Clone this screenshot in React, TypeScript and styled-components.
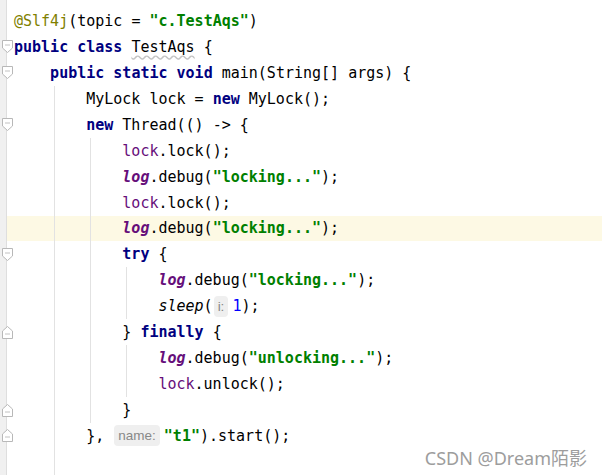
import React from "react";
import styled, { createGlobalStyle } from "styled-components";

const Global = createGlobalStyle`
  html, body { margin: 0; padding: 0; background: #ffffff; }
  #root { height: 100vh; }
`;

type Kind = "p" | "kw" | "ann" | "str" | "num" | "field" | "var" | "it" | "cls" | "hint";
type Tok = [Kind, string];
type Fold = "open" | "close" | undefined;

interface LineDef {
  indent: number;
  guides: number[];
  toks: Tok[];
  fold?: Fold;
  hl?: boolean;
}

const LINES: LineDef[] = [
  { indent: 0, guides: [], toks: [["ann", "@Slf4j"], ["p", "(topic = "], ["str", '"c.TestAqs"'], ["p", ")"]] },
  { indent: 0, guides: [], fold: "open", toks: [["kw", "public class "], ["cls", "TestAqs"], ["p", " {"]] },
  { indent: 1, guides: [], fold: "open", toks: [["kw", "public static void "], ["p", "main(String[] args) {"]] },
  { indent: 2, guides: [1], toks: [["p", "MyLock lock = "], ["kw", "new "], ["p", "MyLock();"]] },
  { indent: 2, guides: [1], fold: "open", toks: [["kw", "new "], ["p", "Thread(() -> {"]] },
  { indent: 3, guides: [1, 2], toks: [["var", "lock"], ["p", ".lock();"]] },
  { indent: 3, guides: [1, 2], toks: [["field", "log"], ["p", ".debug("], ["str", '"locking..."'], ["p", ");"]] },
  { indent: 3, guides: [1, 2], toks: [["var", "lock"], ["p", ".lock();"]] },
  { indent: 3, guides: [1, 2], hl: true, toks: [["field", "log"], ["p", ".debug("], ["str", '"locking..."'], ["p", ");"]] },
  { indent: 3, guides: [1, 2], fold: "open", toks: [["kw", "try "], ["p", "{"]] },
  { indent: 4, guides: [1, 2, 3], toks: [["field", "log"], ["p", ".debug("], ["str", '"locking..."'], ["p", ");"]] },
  { indent: 4, guides: [1, 2, 3], toks: [["it", "sleep"], ["p", "("], ["hint", "i:"], ["num", "1"], ["p", ");"]] },
  { indent: 3, guides: [1, 2], fold: "close", toks: [["p", "} "], ["kw", "finally "], ["p", "{"]] },
  { indent: 4, guides: [1, 2, 3], toks: [["field", "log"], ["p", ".debug("], ["str", '"unlocking..."'], ["p", ");"]] },
  { indent: 4, guides: [1, 2, 3], toks: [["var", "lock"], ["p", ".unlock();"]] },
  { indent: 3, guides: [1, 2], fold: "close", toks: [["p", "}"]] },
  { indent: 2, guides: [1], fold: "close", toks: [["p", "}, "], ["hint", "name:"], ["str", '"t1"'], ["p", ").start();"]] },
  { indent: 2, guides: [1], toks: [] },
];

const LINE_H = "26.12px";

const Editor = styled.div`
  display: flex;
  height: 100vh;
  overflow: hidden;
  background: #ffffff;
  position: relative;
`;

const Gutter = styled.div`
  width: 6px;
  flex: none;
  padding-top: 8px;
  background: #f0f0f0;
  border-right: 1px solid #dedede;
  display: flex;
  flex-direction: column;
`;

const GutterCell = styled.div`
  height: ${LINE_H};
  display: flex;
  align-items: center;
  overflow: visible;
`;

const FoldIcon = styled.svg`
  flex: none;
  width: 11px;
  height: 13px;
  margin-left: 2px;
  position: relative;
  z-index: 1;
`;

const Code = styled.div`
  flex: 1;
  padding-top: 8px;
  display: flex;
  flex-direction: column;
  font-family: "DejaVu Sans Mono", "Liberation Mono", monospace;
  font-size: 15px;
  color: #000000;
`;

const Row = styled.div<{ $hl?: boolean }>`
  display: flex;
  align-items: center;
  height: ${LINE_H};
  padding-left: 7px;
  white-space: pre;
  background: ${(p) => (p.$hl ? "#fdf9e4" : "transparent")};
`;

const Indent = styled.span<{ $guide: boolean }>`
  flex: none;
  width: 4ch;
  align-self: stretch;
  background: ${(p) =>
    p.$guide ? "linear-gradient(#e2e2e2, #e2e2e2) no-repeat 3.5px 0 / 1px 100%" : "none"};
`;

const Tk = styled.span<{ $k: Kind }>`
  color: ${(p) =>
    p.$k === "kw"
      ? "#000080"
      : p.$k === "ann"
      ? "#808000"
      : p.$k === "str"
      ? "#008000"
      : p.$k === "num"
      ? "#0000ff"
      : p.$k === "field" || p.$k === "var"
      ? "#660e7a"
      : "#000000"};
  font-weight: ${(p) => (p.$k === "kw" || p.$k === "str" || p.$k === "field" ? 700 : 400)};
  font-style: ${(p) => (p.$k === "field" || p.$k === "it" ? "italic" : "normal")};
  text-decoration: ${(p) => (p.$k === "cls" ? "underline wavy #c4c4c4" : "none")};
  text-underline-offset: 3px;
`;

const Hint = styled.span`
  flex: none;
  display: inline-flex;
  align-items: center;
  height: 21px;
  padding: 0 4px;
  margin: 0 4px 0 1px;
  border-radius: 4px;
  background: #efefef;
  color: #888888;
  font-family: "Liberation Sans", Arial, sans-serif;
  font-size: 13.5px;
`;

const Watermark = styled.div`
  position: absolute;
  right: 15px;
  bottom: 7px;
  font-family: "Noto Sans", "Noto Sans CJK SC", sans-serif;
  font-size: 18px;
  line-height: 20px;
  color: #9d9d9d;
  text-shadow: 1px 1px 1px rgba(255, 255, 255, 0.9);
  white-space: nowrap;
`;

function FoldMark({ dir }: { dir: "open" | "close" }) {
  const d =
    dir === "open"
      ? "M0.5 0.5 H10.5 V8 L5.5 12.5 L0.5 8 Z"
      : "M0.5 12.5 H10.5 V5 L5.5 0.5 L0.5 5 Z";
  return (
    <FoldIcon viewBox="0 0 11 13">
      <path d={d} fill="#ffffff" stroke="#b8b8b8" strokeWidth="1" />
      <path d={dir === "open" ? "M3 5 H8" : "M3 8 H8"} stroke="#c2c2c2" strokeWidth="1" />
    </FoldIcon>
  );
}

export default function App() {
  return (
    <>
      <Global />
      <Editor>
        <Gutter>
          {LINES.map((l, i) => (
            <GutterCell key={i}>{l.fold ? <FoldMark dir={l.fold} /> : null}</GutterCell>
          ))}
        </Gutter>
        <Code>
          {LINES.map((l, i) => (
            <Row key={i} $hl={l.hl}>
              {Array.from({ length: l.indent }).map((_, j) => (
                <Indent key={"i" + j} $guide={l.guides.includes(j)} />
              ))}
              {l.toks.map(([k, t], j) =>
                k === "hint" ? (
                  <Hint key={j}>{t}</Hint>
                ) : (
                  <Tk key={j} $k={k}>
                    {t}
                  </Tk>
                )
              )}
            </Row>
          ))}
        </Code>
        <Watermark>CSDN @Dream陌影</Watermark>
      </Editor>
    </>
  );
}
